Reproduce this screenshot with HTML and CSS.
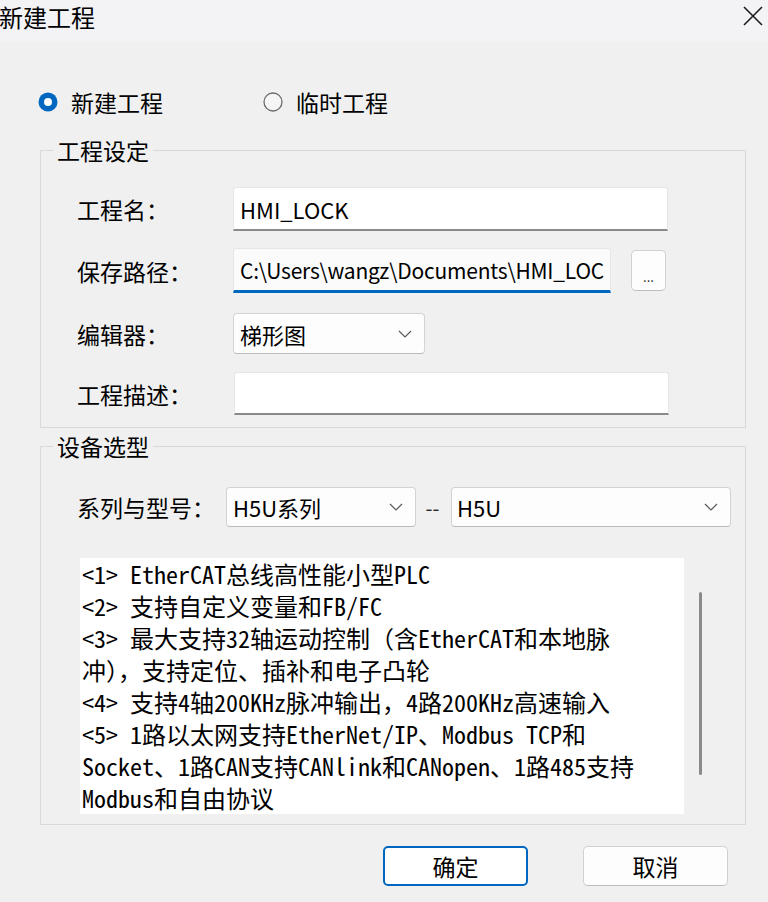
FILE: index.html
```html
<!DOCTYPE html>
<html lang="zh-CN">
<head>
<meta charset="utf-8">
<title>新建工程</title>
<link rel="stylesheet" href="styles.css">
</head>
<body>
<div class="titlebar">
  <div class="title">新建工程</div>
  <svg class="close" width="22" height="22" viewBox="0 0 22 22"><path d="M2 2 L20 20 M20 2 L2 20" stroke="#1b1b1b" stroke-width="1.6" fill="none"/></svg>
</div>
<div class="main">
  <div class="radios">
    <div class="radio first">
      <svg width="20" height="20" viewBox="0 0 20 20"><circle cx="10" cy="10" r="9.5" fill="#0067c0"/><circle cx="10" cy="10" r="4" fill="#ffffff"/></svg>
      <span>新建工程</span>
    </div>
    <div class="radio">
      <svg width="20" height="20" viewBox="0 0 20 20"><circle cx="10" cy="10" r="9" fill="#f5f5f5" stroke="#6b6b6b" stroke-width="1.3"/></svg>
      <span>临时工程</span>
    </div>
  </div>

  <div class="group group1">
    <div class="legend">工程设定</div>
    <div class="row r1">
      <div class="label">工程名：</div>
      <div class="input wide"><span class="val">HMI_LOCK</span></div>
    </div>
    <div class="row r2">
      <div class="label">保存路径：</div>
      <div class="input path"><span class="val">C:\Users\wangz\Documents\HMI_LOC</span></div>
      <div class="browse">...</div>
    </div>
    <div class="row r3">
      <div class="label">编辑器：</div>
      <div class="select editor"><span class="val">梯形图</span>
        <svg class="chev" width="14" height="8" viewBox="0 0 14 8"><path d="M1 1 L7 7 L13 1" stroke="#5a5a5a" stroke-width="1.2" fill="none"/></svg>
      </div>
    </div>
    <div class="row r4">
      <div class="label">工程描述：</div>
      <div class="input wide desc"></div>
    </div>
  </div>

  <div class="group group2">
    <div class="legend">设备选型</div>
    <div class="row r5">
      <div class="label label2">系列与型号：</div>
      <div class="select series"><span class="val">H5U系列</span>
        <svg class="chev" width="14" height="8" viewBox="0 0 14 8"><path d="M1 1 L7 7 L13 1" stroke="#5a5a5a" stroke-width="1.2" fill="none"/></svg>
      </div>
      <div class="dash">--</div>
      <div class="select model"><span class="val">H5U</span>
        <svg class="chev" width="14" height="8" viewBox="0 0 14 8"><path d="M1 1 L7 7 L13 1" stroke="#5a5a5a" stroke-width="1.2" fill="none"/></svg>
      </div>
    </div>
    <div class="descrow">
      <div class="infobox">
        <div class="line">&lt;1&gt; EtherCAT总线高性能小型PLC</div>
        <div class="line">&lt;2&gt; 支持自定义变量和FB/FC</div>
        <div class="line">&lt;3&gt; 最大支持32轴运动控制（含EtherCAT和本地脉</div>
        <div class="line">冲），支持定位、插补和电子凸轮</div>
        <div class="line">&lt;4&gt; 支持4轴200KHz脉冲输出，4路200KHz高速输入</div>
        <div class="line">&lt;5&gt; 1路以太网支持EtherNet/IP、Modbus TCP和</div>
        <div class="line">Socket、1路CAN支持CANlink和CANopen、1路485支持</div>
        <div class="line">Modbus和自由协议</div>
      </div>
      <div class="scroll"><div class="thumb"></div></div>
    </div>
  </div>

  <div class="buttons">
    <div class="btn primary">确定</div>
    <div class="btn">取消</div>
  </div>
</div>
</body>
</html>
```

FILE: styles.css
```css
html, body {
  margin: 0;
  padding: 0;
}
body {
  width: 768px;
  height: 902px;
  overflow: hidden;
  background: #f0f0f0;
  color: #000;
  font-family: "Noto Sans CJK SC", "Noto Sans", sans-serif;
}
.titlebar {
  height: 42px;
  background: #f3f3f6;
  display: flex;
  justify-content: space-between;
  align-items: flex-start;
}
.title {
  font-size: 24px;
  line-height: 34px;
  margin-left: -1px;
}
.close {
  margin: 5px 4px 0 0;
}
.main {
  padding-left: 40px;
  width: 706px;
}
.radios {
  display: flex;
  align-items: center;
  margin-top: 49px;
  height: 22px;
}
.radio {
  display: flex;
  align-items: center;
  gap: 13px;
  font-size: 23px;
  line-height: 22px;
}
.radio.first {
  width: 225px;
  margin-left: -2px;
}
.group {
  border: 1px solid #d9d9d9;
  width: 704px;
}
.group1 {
  margin-top: 37px;
  padding-bottom: 12px;
}
.group2 {
  margin-top: 18px;
  padding-bottom: 10px;
}
.legend {
  margin: -12px 0 0 12px;
  padding: 0 4px;
  width: max-content;
  background: #f0f0f0;
  font-size: 23px;
  line-height: 22px;
}
.row {
  display: flex;
  align-items: center;
  padding-left: 36px;
}
.label {
  width: 156px;
  font-size: 23px;
  flex: none;
}
.label2 {
  width: 149px;
}
.r1 { margin-top: 26px; height: 44px; }
.r2 { margin-top: 17px; height: 45px; }
.r3 { margin-top: 20px; height: 41px; }
.r4 { margin-top: 18px; height: 43px; }
.r5 { margin-top: 30px; height: 40px; }

.input {
  box-sizing: border-box;
  height: 100%;
  background: #ffffff;
  border: 1px solid #e6e6e6;
  border-bottom: 2px solid #8a8a8a;
  border-radius: 3px 3px 0 0;
  display: flex;
  align-items: center;
  padding-left: 6px;
  overflow: hidden;
  white-space: nowrap;
}
.val {
  font-size: 22px;
}
.wide {
  width: 435px;
}
.desc {
  margin-left: 1px;
}
.path {
  width: 378px;
  background: #fbfbfb;
  border-bottom: 3px solid #0067c0;
}
.path .val {
  font-size: 21px;
  letter-spacing: -0.2px;
}
.browse {
  box-sizing: border-box;
  width: 35px;
  height: 41px;
  margin-left: 20px;
  background: #fdfdfd;
  border: 1px solid #d0d0d0;
  border-bottom-color: #bdbdbd;
  border-radius: 5px;
  display: flex;
  justify-content: center;
  align-items: flex-end;
  padding-bottom: 7px;
  font-size: 13px;
  line-height: 13px;
  color: #222;
}
.select {
  box-sizing: border-box;
  height: 100%;
  background: #fdfdfd;
  border: 1px solid #d3d3d3;
  border-bottom-color: #bcbcbc;
  border-radius: 4px;
  display: flex;
  align-items: center;
  justify-content: space-between;
  padding: 0 12px 0 6px;
}
.editor { width: 192px; }
.series { width: 190px; }
.model { width: 280px; padding-left: 5px; }
.dash {
  width: 15px;
  margin: 0 11px 0 9px;
  font-size: 20px;
  text-align: center;
  color: #222;
}
.descrow {
  display: flex;
  margin-top: 31px;
  padding-left: 39px;
}
.infobox {
  width: 604px;
  height: 256px;
  box-sizing: border-box;
  background: #ffffff;
  padding: 0 0 0 2px;
  font-family: "Noto Sans Mono CJK SC", "Noto Sans CJK SC", monospace;
  font-size: 24px;
  line-height: 32px;
}
.line {
  white-space: pre;
}
.scroll {
  margin-left: 15px;
  padding-top: 34px;
}
.thumb {
  width: 3px;
  height: 183px;
  background: #8a8a8a;
  border-radius: 2px;
}
.buttons {
  display: flex;
  gap: 55px;
  margin-top: 21px;
  padding-left: 343px;
}
.btn {
  box-sizing: border-box;
  width: 145px;
  height: 40px;
  background: #fdfdfd;
  border: 1px solid #d0d0d0;
  border-bottom-color: #bcbcbc;
  border-radius: 5px;
  display: flex;
  justify-content: center;
  align-items: center;
  font-size: 23px;
}
.btn.primary {
  border: 2px solid #0067c0;
  background: #ffffff;
}
```
